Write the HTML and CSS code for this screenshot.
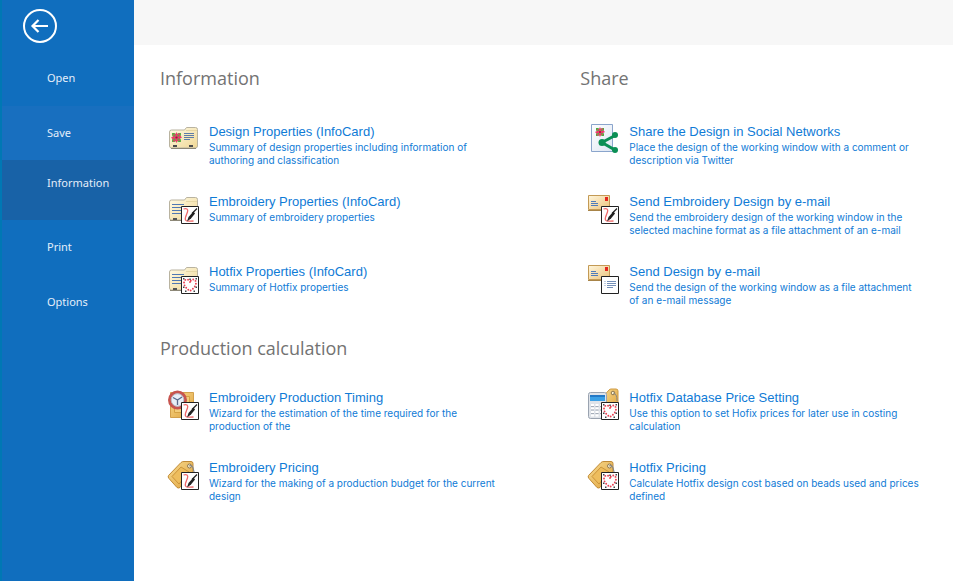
FILE: index.html
```html
<!DOCTYPE html>
<html lang="en">
<head>
<meta charset="utf-8">
<title>Information</title>
<link rel="stylesheet" href="styles.css">
</head>
<body>
<svg class="sprite" aria-hidden="true">
  <defs>
    <linearGradient id="cream" x1="0" y1="0" x2="1" y2="1"><stop offset="0" stop-color="#fffbe6"/><stop offset="1" stop-color="#f0d794"/></linearGradient>
    <linearGradient id="mail" x1="0" y1="0" x2="1" y2="1"><stop offset="0" stop-color="#fff6dc"/><stop offset="1" stop-color="#ecc47c"/></linearGradient>
    <linearGradient id="gold" x1="0" y1="0" x2="1" y2="1"><stop offset="0" stop-color="#f8dc92"/><stop offset="1" stop-color="#dfa13a"/></linearGradient>
    <linearGradient id="paper" x1="0" y1="0" x2="1" y2="1"><stop offset="0" stop-color="#ffffff"/><stop offset="1" stop-color="#dde6f3"/></linearGradient>
  </defs>
  <symbol id="flower" viewBox="0 0 10 10">
    <path d="M1 1h2l2 1 2-1h2v2L8 5l1 2v2H7L5 8 3 9H1V7l1-2-1-2z" fill="#4fae3c"/>
    <path d="M5 0l1 2 2-1v2l2 2-2 1v2L6 8 5 10 4 8 2 9V7L0 5l2-1V2l2 0z" fill="#ee3a6c"/>
    <path d="M2.500 2.500h1.500v1.500H2.500zM6 2.500h1.500v1.500H6zM2.500 6h1.500v1.500H2.500zM6 6h1.500v1.500H6z" fill="#55b53f"/>
    <circle cx="5" cy="5" r="1" fill="#9c1740"/>
  </symbol>
  <symbol id="folder" viewBox="0 0 34 34">
    <path d="M2.500 10q0-2 2-2h13l2-2.500h9q2 0 2 2V26q0 2-2 2h-24q-2 0-2-2z" fill="url(#cream)" stroke="#b9b3a0"/>
    <path d="M19 9.500h11" stroke="#e6d7a4"/>
    <path d="M3 28.500h27" stroke="#8d8878"/>
    <path d="M5 12.500h12M5 15.500h10M5 18.500h10M5 21.500h10" stroke="#5078b4"/>
    <path d="M6 26h4v2H6z" fill="#555"/>
  </symbol>
  <symbol id="stitch" viewBox="0 0 34 34">
    <path d="M14.500 14.500h17v17h-17z" fill="#fff" stroke="#222"/>
    <path d="M16.500 17c3-1 5 0 4 3s-3 6-2 8 4 1 8 1" fill="none" stroke="#ef6868" stroke-width="1.300"/>
    <path d="M30 16.500l-5 5" stroke="#222" stroke-width="1.300"/>
    <path d="M26.500 19.500l1.500 2-4 5-4 3 1.500-4.500z" fill="#222"/>
  </symbol>
  <symbol id="heart" viewBox="0 0 34 34">
    <path d="M14.500 14.500h17v17h-17z" fill="#fff" stroke="#222"/>
    <path d="M23 20c-2-4-6-3-6 1 0 3 3 6 6 8 3-2 6-5 6-8 0-4-4-5-6-1z" fill="none" stroke="#ea4052" stroke-width="1.900" stroke-linecap="round" stroke-dasharray="0 2.900"/>
    <path d="M16 16h1.500v1.500H16zM28.500 16H30v1.500h-1.500zM22.300 16.500h1.500V18h-1.500zM16 24.500h1.500V26H16zM28.500 24.500H30V26h-1.500zM18 28.500h1.500V30H18zM26.500 28.500H28V30h-1.500z" fill="#444"/>
  </symbol>
  <symbol id="envelope" viewBox="0 0 34 34">
    <path d="M1.500 3.500h21v14h-21z" fill="url(#mail)" stroke="#c39a55"/>
    <path d="M1 18.500h22" stroke="#a88448"/>
    <path d="M18 5h3v4h-3z" fill="#e3261d"/>
    <path d="M4 9.500h5M4 11.500h7M4 13.500h7" stroke="#4f7dbb"/>
  </symbol>
  <symbol id="tag" viewBox="0 0 34 34">
    <path d="M1.500 17.500L14 4.500q1-1 3-1h7q2 0 2 2V13q0 1-1 2L13 29.500q-1.500 1-3 0l-8-9q-1.500-1.500-.5-3z" fill="url(#gold)" stroke="#c18a35"/>
    <path d="M5 18.500l9-9.500 8 5-10 12z" fill="#eebd5d" stroke="#cc943b"/>
    <circle cx="22.500" cy="8" r="2" fill="#fff4d0" stroke="#8d7650"/>
    <path d="M22 8q4-2 5 6" fill="none" stroke="#8d8a83" stroke-width="1.200"/>
  </symbol>
  <symbol id="i-card" viewBox="0 0 34 34">
    <path d="M2.500 10q0-2 2-2h13l2-2.500h9q2 0 2 2V24q0 2-2 2h-24q-2 0-2-2z" fill="url(#cream)" stroke="#b9b3a0"/>
    <path d="M19 8.500h11" stroke="#e6d7a4"/>
    <path d="M4 26.500h25" stroke="#8d8878"/>
    <use href="#flower" x="4" y="10" width="11" height="11"/>
    <path d="M17 11.500h10M17 13.500h10M17 15.500h10M17 17.500h6" stroke="#5d7ca8"/>
    <path d="M6 23h4v2H6zM22 23h4v2h-4z" fill="#4c4c4c"/>
  </symbol>
  <symbol id="i-share" viewBox="0 0 34 34">
    <path d="M4.500 2.500h21v27h-21z" fill="url(#paper)" stroke="#8aa5cc"/>
    <use href="#flower" x="8" y="5" width="10" height="10"/>
    <path d="M28 13.500L15 20.500l13 7.500" fill="none" stroke="#0b8f55" stroke-width="3"/>
    <circle cx="28" cy="13" r="3" fill="#0b8f55"/>
    <circle cx="15" cy="20.500" r="3.500" fill="#0b8f55"/>
    <circle cx="28" cy="28" r="3" fill="#0b8f55"/>
  </symbol>
  <symbol id="i-note" viewBox="0 0 34 34">
    <path d="M14.500 14.500h17v17h-17z" fill="#fff" stroke="#222"/>
    <path d="M20 19.500h9M20 21.500h9M20 23.500h9M20 25.500h6" stroke="#7590b8"/>
    <path d="M17 19.500h2M17 21.500h2M17 23.500h2" stroke="#c3d0e3"/>
  </symbol>
  <symbol id="i-clock" viewBox="0 0 34 34">
    <path d="M3.500 4.500h23v25h-23z" fill="url(#gold)" stroke="#d3a04c"/>
    <path d="M7.500 8.500h15v16h-15z" fill="#f3cd7c" stroke="#d5a245"/>
    <circle cx="10.500" cy="12" r="8" fill="#e8eef7" stroke="#c7544f" stroke-width="3"/>
    <circle cx="10.500" cy="12" r="6.300" fill="none" stroke="#b9b9c6"/>
    <path d="M10.500 12L6 9.500M10.500 12l4.500-3M10.500 12v5" stroke="#58698c" stroke-width="1.300"/>
  </symbol>
  <symbol id="i-calc" viewBox="0 0 34 34">
    <path d="M14 11l8-9q1-1 2-1h5q2 0 2 2v12l-8 8z" fill="url(#gold)" stroke="#cf9a43"/>
    <circle cx="26" cy="5" r="1.800" fill="#fff4d0" stroke="#8d7650"/>
    <path d="M26 5q4 0 4 8" fill="none" stroke="#8d8a83"/>
    <rect x="1.500" y="4.500" width="18" height="26" rx="2" fill="#dfe3e9" stroke="#9aa3b0"/>
    <path d="M3 7h15v6H3z" fill="#3aa0e6"/>
    <path d="M3 7h15v2H3z" fill="#2278c6"/>
    <path d="M4 17h12M4 20.500h12M4 24h12M4 27.500h12" stroke="#fff" stroke-width="2" stroke-dasharray="3 1.500"/>
    <path d="M4 18.500h12M4 22h12M4 25.500h12" stroke="#a5adb9" stroke-dasharray="3 1.500"/>
  </symbol>
</svg>
<div class="app">
  <aside class="sidebar">
    <button class="back" type="button" aria-label="Back">
      <svg viewBox="0 0 36 36" width="36" height="36" fill="none" stroke="#fff" aria-hidden="true">
        <circle cx="18" cy="18" r="16" stroke-width="2"/>
        <path d="M26 18H10.500M16.500 12l-6 6 6 6" stroke-width="2.200"/>
      </svg>
    </button>
    <nav class="menu">
      <a href="#open">Open</a>
      <a class="hover" href="#save">Save</a>
      <a class="current" href="#information" aria-current="page">Information</a>
      <a href="#print">Print</a>
      <a href="#options">Options</a>
    </nav>
  </aside>
  <main class="main">
    <div class="topbar"></div>
    <div class="content">
      <section class="information">
        <h2>Information</h2>
        <div class="items">
          <a class="item" href="#design-properties">
            <svg class="icon" aria-hidden="true"><use href="#i-card"/></svg>
            <span class="text"><span class="title">Design Properties (InfoCard)</span>
            <span class="desc">Summary of design properties including information of<br>authoring and classification</span></span>
          </a>
          <a class="item" href="#embroidery-properties">
            <svg class="icon" aria-hidden="true"><use href="#folder"/><use href="#stitch"/></svg>
            <span class="text"><span class="title">Embroidery Properties (InfoCard)</span>
            <span class="desc">Summary of embroidery properties</span></span>
          </a>
          <a class="item" href="#hotfix-properties">
            <svg class="icon" aria-hidden="true"><use href="#folder"/><use href="#heart"/></svg>
            <span class="text"><span class="title">Hotfix Properties (InfoCard)</span>
            <span class="desc">Summary of Hotfix properties</span></span>
          </a>
        </div>
      </section>
      <section class="share">
        <h2>Share</h2>
        <div class="items">
          <a class="item" href="#social">
            <svg class="icon" aria-hidden="true"><use href="#i-share"/></svg>
            <span class="text"><span class="title">Share the Design in Social Networks</span>
            <span class="desc">Place the design of the working window with a comment or<br>description via Twitter</span></span>
          </a>
          <a class="item" href="#send-embroidery">
            <svg class="icon" aria-hidden="true"><use href="#envelope"/><use href="#stitch"/></svg>
            <span class="text"><span class="title">Send Embroidery Design by e-mail</span>
            <span class="desc">Send the embroidery design of the working window in the<br>selected machine format as a file attachment of an e-mail</span></span>
          </a>
          <a class="item" href="#send-design">
            <svg class="icon" aria-hidden="true"><use href="#envelope"/><use href="#i-note"/></svg>
            <span class="text"><span class="title">Send Design by e-mail</span>
            <span class="desc">Send the design of the working window as a file attachment<br>of an e-mail message</span></span>
          </a>
        </div>
      </section>
      <section class="production">
        <h2>Production calculation</h2>
        <div class="items">
          <a class="item" href="#timing">
            <svg class="icon" aria-hidden="true"><use href="#i-clock"/><use href="#stitch"/></svg>
            <span class="text"><span class="title">Embroidery Production Timing</span>
            <span class="desc">Wizard for the estimation of the time required for the<br>production of the</span></span>
          </a>
          <a class="item" href="#price-setting">
            <svg class="icon" aria-hidden="true"><use href="#i-calc"/><use href="#heart"/></svg>
            <span class="text"><span class="title">Hotfix Database Price Setting</span>
            <span class="desc">Use this option to set Hofix prices for later use in costing<br>calculation</span></span>
          </a>
          <a class="item" href="#embroidery-pricing">
            <svg class="icon" aria-hidden="true"><use href="#tag"/><use href="#stitch"/></svg>
            <span class="text"><span class="title">Embroidery Pricing</span>
            <span class="desc">Wizard for the making of a production budget for the current<br>design</span></span>
          </a>
          <a class="item" href="#hotfix-pricing">
            <svg class="icon" aria-hidden="true"><use href="#tag"/><use href="#heart"/></svg>
            <span class="text"><span class="title">Hotfix Pricing</span>
            <span class="desc">Calculate Hotfix design cost based on beads used and prices<br>defined</span></span>
          </a>
        </div>
      </section>
    </div>
  </main>
</div>
</body>
</html>
```
FILE: styles.css
```css
* {
  box-sizing: border-box;
}

body {
  margin: 0;
  background: #fff;
  font-family: "Liberation Sans", Arial, sans-serif;
}

.sprite {
  position: absolute;
  width: 0;
  height: 0;
}

a {
  color: inherit;
  text-decoration: none;
}

.app {
  display: flex;
  min-height: 100vh;
}

.sidebar {
  flex: 0 0 134px;
  background: #106ebe;
  border-left: 2px solid #0078b4;
}

.back {
  display: block;
  margin: 8px 0 0 20px;
  padding: 0;
  border: 0;
  background: none;
}

.back svg {
  display: block;
}

.menu {
  display: flex;
  flex-direction: column;
  margin-top: 7px;
  color: #e4eefa;
  font: 11px/16px "Noto Sans", "Open Sans", sans-serif;
}

.menu a {
  padding: 19px 0 20px 45px;
}

.menu a.hover {
  padding-bottom: 19px;
  background: #186fbf;
}

.menu a.current {
  padding: 15px 0 29px 45px;
  background: #1862a7;
}

.main {
  flex: 1;
  min-width: 0;
}

.topbar {
  height: 45px;
  background: #f7f7f7;
}

.content {
  display: grid;
  grid-template-columns: 53% 1fr;
  row-gap: 20px;
  padding: 21px 0 0 26px;
}

.production {
  grid-column: 1 / -1;
}

h2 {
  margin: 0 0 32px;
  color: #737373;
  font: 18px/24px "Open Sans", "Noto Sans", sans-serif;
}

.items {
  display: grid;
  grid-auto-rows: 54px;
  row-gap: 16px;
}

.production h2 {
  margin-bottom: 28px;
}

.production .items {
  grid-template-columns: 53% 1fr;
}

.item {
  display: flex;
  gap: 8px;
  padding-left: 7px;
  color: #0f7bd6;
}

.icon {
  flex: none;
  width: 34px;
  height: 34px;
}

.text {
  white-space: nowrap;
}

.title,
.desc {
  display: block;
}

.title {
  font-size: 13px;
  line-height: 19px;
}

.desc {
  font-family: Inter, "Liberation Sans", sans-serif;
  font-size: 10px;
  line-height: 13px;
}
```
